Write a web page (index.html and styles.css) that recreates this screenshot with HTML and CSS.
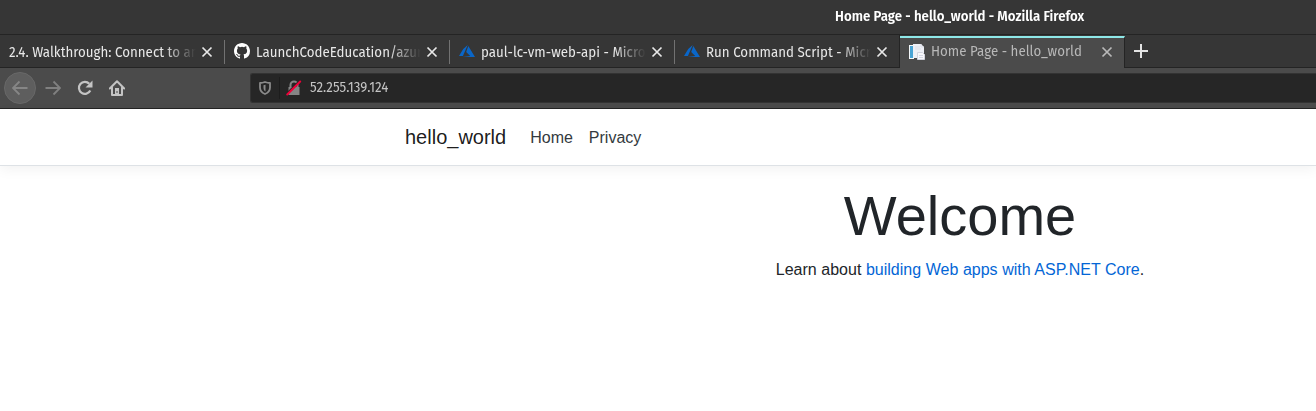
FILE: index.html
```html
<!DOCTYPE html>
<html lang="en">
<head>
<meta charset="utf-8">
<title>Home Page - hello_world</title>
<link rel="stylesheet" href="styles.css">
</head>
<body>
<svg class="defs" aria-hidden="true">
  <symbol id="close" viewBox="0 0 12 12"><path d="M1.500 1.500l9 9M10.500 1.500l-9 9" fill="none" stroke="currentColor" stroke-width="1.700"/></symbol>
  <symbol id="azure" viewBox="0 0 16 16"><path d="M8.700 2L4.200 5.900 0 13h3.900zM9.300 3L7.200 8.900l4 4.200L3.500 14H16z" fill="#0a66c8"/></symbol>
</svg>
<div class="window">
  <header class="titlebar"><span class="title">Home Page - hello_world - Mozilla Firefox</span></header>
  <div class="tabs">
    <div class="tab">
      <span class="label fade">2.4. Walkthrough: Connect to an</span>
      <svg class="close"><use href="#close"/></svg>
    </div>
    <div class="tab">
      <svg class="favicon" viewBox="0 0 16 16"><path fill="#fff" d="M8 0C3.580 0 0 3.580 0 8c0 3.540 2.290 6.530 5.470 7.590.4.070.550-.170.550-.380 0-.190-.010-.820-.010-1.490-2.010.370-2.530-.490-2.690-.940-.090-.230-.480-.940-.820-1.130-.280-.150-.680-.520-.010-.530.630-.010 1.080.580 1.230.820.720 1.210 1.870.870 2.330.660.070-.520.280-.870.510-1.070-1.780-.2-3.640-.890-3.640-3.950 0-.870.310-1.590.820-2.150-.080-.2-.360-1.020.080-2.120 0 0 .670-.210 2.200.820a7.600 7.600 0 014 0c1.530-1.040 2.200-.820 2.200-.820.440 1.100.160 1.920.080 2.120.510.560.820 1.270.820 2.150 0 3.070-1.870 3.750-3.650 3.950.290.250.540.730.540 1.480 0 1.070-.010 1.930-.010 2.200 0 .210.150.460.550.380A8 8 0 0016 8c0-4.420-3.580-8-8-8z"/></svg>
      <span class="label fade">LaunchCodeEducation/azur</span>
      <svg class="close"><use href="#close"/></svg>
    </div>
    <div class="tab">
      <svg class="favicon"><use href="#azure"/></svg>
      <span class="label fade">paul-lc-vm-web-api - Micro</span>
      <svg class="close"><use href="#close"/></svg>
    </div>
    <div class="tab last">
      <svg class="favicon"><use href="#azure"/></svg>
      <span class="label fade">Run Command Script - Micr</span>
      <svg class="close"><use href="#close"/></svg>
    </div>
    <div class="tab active">
      <svg class="favicon" viewBox="0 0 16 16">
        <path d="M0 1h5v14H0z" fill="#f4f8fa"/><path d="M1 2h3v12H1z" fill="#49a4d4"/>
        <path d="M4 0h8l3 3v11H4z" fill="#eef0f6"/><path d="M12 0v3h3M6 3h5M6 5h6" fill="none" stroke="#dcdfe8"/>
        <path d="M8.500 8.500h5l2 2v5h-7z" fill="#f8f8fb" stroke="#d2d4df"/><path d="M10 11.500h4M10 13.500h4" stroke="#d5d8e5"/>
      </svg>
      <span class="label">Home Page - hello_world</span>
      <svg class="close"><use href="#close"/></svg>
    </div>
    <div class="tabs-rest"><svg class="plus" viewBox="0 0 14 14"><path d="M7 0v14M0 7h14" stroke="#e4e4e4" stroke-width="2"/></svg></div>
  </div>
  <div class="toolbar">
    <span class="back"><svg viewBox="0 0 16 16"><path class="line" d="M15.500 8H1M7.500 1.500L1 8l6.500 6.500"/></svg></span>
    <svg class="tool dim" viewBox="0 0 16 16"><path class="line" d="M.5 8H15M8.500 1.500L15 8l-6.500 6.500"/></svg>
    <svg class="tool" viewBox="0 0 16 16"><path d="M12.300 3.700A6 6 0 1013.300 10.500" fill="none" stroke="currentColor" stroke-width="2.200"/><path d="M15.500.5v7h-7z" fill="currentColor"/></svg>
    <svg class="tool" viewBox="0 0 16 16"><path d="M.8 8.500L8 1.300l7.200 7.200M3 7.500V15h10V7.500" fill="none" stroke="currentColor" stroke-width="2" stroke-linejoin="round" stroke-linecap="round"/><path d="M6 8h4v7H6z" fill="currentColor"/><path d="M7.500 11h1v2h-1z" fill="#4b4b4b"/></svg>
    <div class="urlbar">
      <svg class="shield" viewBox="0 0 12 14"><path d="M6 1C8 1.700 9.500 2 11 2v4.500c0 3-2 5.300-5 6.500-3-1.200-5-3.500-5-6.500V2c1.500 0 3-.3 5-1z" fill="none" stroke="currentColor" stroke-width="1.800" stroke-linejoin="round"/><path d="M6.500 3.700v6.800C4.800 9.500 4.500 8 4.500 6.500V4.200z" fill="currentColor"/></svg>
      <span class="divider"></span>
      <svg class="lock" viewBox="0 0 16 16"><path d="M4.500 8V5a3.500 3.500 0 017 0v3" fill="none" stroke="#858585" stroke-width="2"/><path d="M2.500 7h11v8h-11z" fill="#858585"/><path d="M1 13.500L13.500 1" stroke="#262626" stroke-width="2"/><path d="M1.200 14.500L14.200 1.500" stroke="#ef0038" stroke-width="1.900" stroke-linecap="round"/></svg>
      <span class="address">52.255.139.124</span>
    </div>
  </div>
  <div class="page">
    <nav class="navbar">
      <a class="brand">hello_world</a>
      <a class="nav-link">Home</a>
      <a class="nav-link">Privacy</a>
    </nav>
    <main class="content">
      <h1>Welcome</h1>
      <p>Learn about <a>building Web apps with ASP.NET Core</a>.</p>
    </main>
  </div>
</div>
</body>
</html>
```
FILE: styles.css
```css
* { box-sizing: border-box; }
body { margin: 0; overflow: hidden; background: #fff; font-family: "Liberation Sans", Arial, sans-serif; }
.defs { display: none; }
svg { display: block; flex: none; }
.window { height: 411px; overflow: hidden; }
.titlebar, .tabs, .toolbar { font-family: "Fira Sans", "Noto Sans", sans-serif; font-size: 13.333px; white-space: nowrap; }
.titlebar { height: 35px; padding-left: 835px; background: #363636; border-bottom: 1px solid #242424; line-height: 34px; color: #fff; font-weight: 600; }
.title { display: inline-block; transform: scale(.996, 1.09); transform-origin: left center; }
.tabs { height: 33px; display: flex; background: #363636; }
.tab { flex: none; width: 225px; height: 33px; padding: 0 12px 0 9px; display: flex; align-items: center; color: #e8e8e8; border-bottom: 1px solid #242424; background: linear-gradient(#727272, #727272) right 5px / 1px 24px no-repeat; }
.tab.last { background: none; border-right: 1px solid #242424; padding-right: 11px; }
.tab.active { background: #4b4b4b; border: 0; border-top: 2px solid #8ee8e8; border-right: 1px solid #242424; color: #b9b9b9; height: 32px; margin-top: 1px; padding: 0 11px 2px 9px; }
.favicon { width: 16px; height: 16px; margin-right: 6px; }
.label { flex: 1; min-width: 0; padding-top: 1px; line-height: 24px; transform: scaleY(1.12); }
.active .label { padding-top: 0; }
.fade { -webkit-mask-image: linear-gradient(to right, #000 calc(100% - 32px), transparent); mask-image: linear-gradient(to right, #000 calc(100% - 32px), transparent); }
.close { width: 12px; height: 12px; margin: 1px 0 0 5px; }
.active .close { margin-top: 0; }
.tabs-rest { flex: 1; padding: 9px 0 0 9px; border-bottom: 1px solid #242424; }
.plus { width: 14px; height: 14px; }
.toolbar { height: 41px; padding: 0 0 1px 4px; display: flex; align-items: center; background: #4b4b4b; border-bottom: 1px solid #242424; color: #c4c4c4; }
.back { flex: none; width: 32px; height: 32px; border-radius: 50%; background: #5e5e5e; border: 1px solid #686868; display: flex; align-items: center; justify-content: center; color: #868686; }
.back svg { width: 16px; height: 16px; }
.line { fill: none; stroke: currentColor; stroke-width: 1.8; }
.tool { width: 16px; height: 16px; margin-left: 16px; }
.dim { margin-left: 9px; color: #808080; }
.urlbar { flex: 1; height: 30px; margin-left: 125px; background: #262626; border: 1px solid #333; border-right: 0; border-radius: 3px 0 0 3px; display: flex; align-items: center; }
.shield { width: 12px; height: 14px; margin-left: 8px; color: #8a8a8a; }
.divider { width: 1px; height: 22px; margin-left: 8px; background: #1d1d1d; }
.lock { width: 16px; height: 16px; margin: 0 8px 0 6px; }
.address { transform: scaleY(1.1); }
.page { height: 302px; color: #212529; font-size: 16px; line-height: 24px; background: #fff; }
.navbar { height: 57px; padding-left: 405px; display: flex; align-items: center; border-bottom: 1px solid #dee2e6; box-shadow: 0 4px 12px rgba(0,0,0,.05); }
.brand { font-size: 20px; color: rgba(0,0,0,.9); margin-right: 16px; }
.nav-link { padding: 2px 8px 0; color: #343a40; }
.content { margin-left: 604px; padding-top: 16px; text-align: center; }
h1 { margin: 0 0 9px; font-size: 56px; font-weight: 300; line-height: 67px; }
p { margin: 0; word-spacing: .15px; }
p a { color: #0366d6; }
```
